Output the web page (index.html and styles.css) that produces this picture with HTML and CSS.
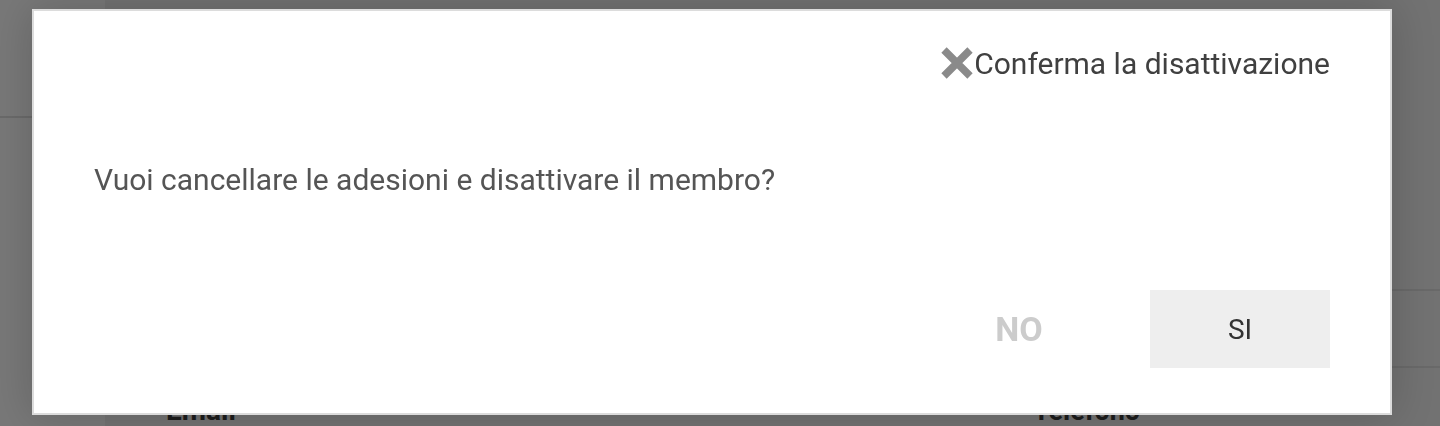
FILE: index.html
```html
<!DOCTYPE html>
<html lang="it">
<head>
<meta charset="utf-8">
<title>Conferma la disattivazione</title>
<link rel="stylesheet" href="styles.css">
</head>
<body>
<div class="page">
  <div class="page-side">
    <div class="side-line"></div>
  </div>
  <div class="page-main">
    <div class="right-lines">
      <div class="rline rline-1"></div>
      <div class="rline rline-2"></div>
    </div>
    <div class="form-row">
      <div class="field-label email">Email <span class="req">*</span></div>
      <div class="field-label phone">Telefono</div>
    </div>
  </div>
</div>
<div class="overlay">
  <div class="dialog">
    <div class="dialog-header">
      <svg class="close-icon" viewBox="0 0 34 32" width="34" height="32" aria-hidden="true">
        <path d="M4 3 L30 29 M30 3 L4 29" stroke="#8a8a8a" stroke-width="7.5" fill="none"/>
      </svg>
      <span class="dialog-title">Conferma la disattivazione</span>
    </div>
    <div class="dialog-body">Vuoi cancellare le adesioni e disattivare il membro?</div>
    <div class="dialog-footer">
      <button class="btn btn-no">NO</button>
      <button class="btn btn-si">SI</button>
    </div>
  </div>
</div>
</body>
</html>
```
FILE: styles.css
```css
* { box-sizing: border-box; }
html, body {
  margin: 0;
  padding: 0;
  width: 1440px;
  height: 426px;
  overflow: hidden;
  font-family: Roboto, "Liberation Sans", sans-serif;
}
.page {
  display: flex;
  width: 1440px;
  height: 426px;
  background: #777777;
}
.page-side {
  width: 105px;
  background: #787878;
  padding-top: 116px;
}
.side-line {
  height: 2px;
  background: #6a6a6a;
}
.page-main {
  flex: 1;
  display: flex;
  flex-direction: column;
  background: #727272;
}
.right-lines {
  height: 398px;
  padding-top: 289px;
  padding-left: 1286px;
}
.rline {
  height: 2px;
  background: #696969;
}
.rline-2 { margin-top: 75px; }
.form-row {
  display: flex;
  padding-left: 61px;
  font-weight: 700;
  font-size: 28px;
  color: #1c1c1c;
}
.field-label { line-height: 30px; }
.email { width: 867px; }
.phone { font-size: 27px; }
.req { color: #8a1c1c; font-size: 20px; vertical-align: top; }
.overlay {
  position: fixed;
  inset: 0;
  padding: 9px 0 0 32px;
}
.dialog {
  width: 1360px;
  height: 406px;
  background: #ffffff;
  border: 2px solid #dcdcdc;
  box-shadow: 0 0 40px rgba(0, 0, 0, 0.18);
  display: flex;
  flex-direction: column;
  padding: 33px 60px 45px 60px;
}
.dialog-header {
  display: flex;
  justify-content: flex-end;
  align-items: center;
  height: 40px;
}
.close-icon { display: block; margin-top: -2px; }
.dialog-title {
  font-size: 30px;
  color: #404040;
  line-height: 40px;
}
.dialog-body {
  margin-top: 76px;
  font-size: 30px;
  line-height: 40px;
  color: #555555;
}
.dialog-footer {
  margin-top: auto;
  display: flex;
  justify-content: flex-end;
  gap: 41px;
}
.btn {
  width: 180px;
  height: 78px;
  border: none;
  font-family: Roboto, "Liberation Sans", sans-serif;
  padding: 0;
}
.btn-no {
  background: transparent;
  color: #cccccc;
  font-weight: 700;
  font-size: 34px;
}
.btn-si {
  background: #eeeeee;
  color: #333333;
  font-size: 28px;
}
```
